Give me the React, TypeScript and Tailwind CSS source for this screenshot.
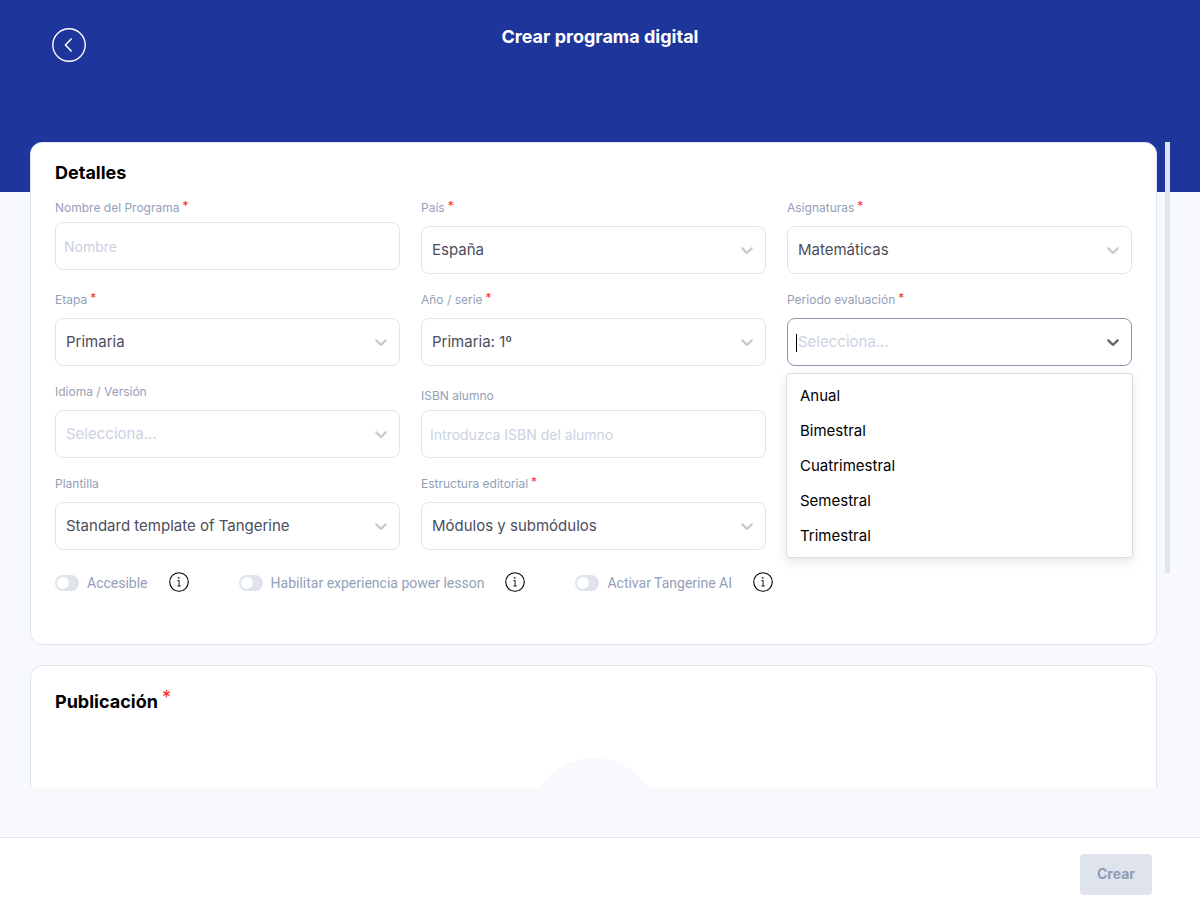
import { useState } from "react";
import type { ReactNode } from "react";

const periods = [
  "Anual",
  "Bimestral",
  "Cuatrimestral",
  "Semestral",
  "Trimestral",
];

const Chevron = ({ active }: { active?: boolean }) => (
  <svg
    viewBox="0 0 20 20"
    aria-hidden="true"
    className={
      active
        ? "pointer-events-none absolute top-[14px] right-[9px] size-5 fill-[#666666]"
        : "pointer-events-none absolute top-[14px] right-[9px] size-5 fill-[#cccccc]"
    }
  >
    <path d="M4.516 7.548c0.436-0.446 1.043-0.481 1.576 0l3.908 3.747 3.908-3.747c0.533-0.481 1.141-0.446 1.574 0 0.436 0.445 0.408 1.197 0 1.615-0.406 0.418-4.695 4.502-4.695 4.502-0.217 0.223-0.502 0.335-0.787 0.335s-0.57-0.112-0.789-0.335c0 0-4.287-4.084-4.695-4.502s-0.436-1.17 0-1.615z" />
  </svg>
);

const InfoIcon = () => (
  <svg
    viewBox="0 0 20 20"
    aria-hidden="true"
    className="size-5 fill-none stroke-black"
  >
    <circle cx="10" cy="10" r="9.3" strokeWidth="1.1" />
    <path d="M8.5 8.5h1.6v5.3M8.4 14h3.4" strokeWidth="0.9" />
    <circle cx="9.8" cy="5.9" r="0.8" className="fill-black stroke-none" />
  </svg>
);

const FieldLabel = ({
  id,
  required,
  children,
}: {
  id: string;
  required?: boolean;
  children: ReactNode;
}) => (
  <label htmlFor={id} className="flex gap-[3px] text-xs text-[#94a0b8]">
    {children}
    {required && <span className="-mt-0.5 text-[#ff2b2b]">*</span>}
  </label>
);

type SelectFieldProps = {
  id: string;
  label: string;
  value?: string;
  required?: boolean;
};

const SelectField = ({ id, label, value, required }: SelectFieldProps) => (
  <div className="flex flex-col gap-[10px]">
    <FieldLabel id={id} required={required}>
      {label}
    </FieldLabel>
    <div className="relative">
      <select
        id={id}
        className={
          value
            ? "h-12 w-full appearance-none rounded-lg border border-[#dfe5ed] bg-white px-[10px] text-[15px] text-[#4b4d5c] outline-none"
            : "h-12 w-full appearance-none rounded-lg border border-[#dfe5ed] bg-white px-[10px] text-[15px] text-[#cbd2e2] outline-none"
        }
      >
        <option>{value ?? "Selecciona..."}</option>
      </select>
      <Chevron />
    </div>
  </div>
);

type TextFieldProps = {
  id: string;
  label: string;
  placeholder: string;
  required?: boolean;
};

const TextField = ({ id, label, placeholder, required }: TextFieldProps) => (
  <div className="flex flex-col gap-[6px]">
    <FieldLabel id={id} required={required}>
      {label}
    </FieldLabel>
    <input
      id={id}
      type="text"
      placeholder={placeholder}
      className="h-12 w-full rounded-lg border border-[#dfe5ed] bg-white px-2 text-sm text-[#4b4d5c] outline-none placeholder:text-[#cbd2e2]"
    />
  </div>
);

const PeriodField = () => {
  const [open, setOpen] = useState(true);
  const [period, setPeriod] = useState("");

  return (
    <div className="flex flex-col gap-[10px]">
      <FieldLabel id="periodo" required>
        Periodo evaluación
      </FieldLabel>
      <div className="relative">
        <select
          id="periodo"
          value={period}
          onMouseDown={(e) => {
            e.preventDefault();
            setOpen(!open);
          }}
          onChange={(e) => setPeriod(e.target.value)}
          className={
            period
              ? "h-12 w-full appearance-none rounded-lg border border-[#8b95ad] bg-white px-[10px] text-[15px] text-[#4b4d5c] outline-none"
              : "h-12 w-full appearance-none rounded-lg border border-[#8b95ad] bg-white px-[10px] text-[15px] text-[#cbd2e2] outline-none"
          }
        >
          <option value="">Selecciona...</option>
          {periods.map((p) => (
            <option key={p} value={p}>
              {p}
            </option>
          ))}
        </select>
        {open && (
          <span className="absolute top-4 left-[9px] h-[18px] w-px bg-black" />
        )}
        <Chevron active={open} />
        {open && (
          <ul
            role="listbox"
            aria-label="Periodo evaluación"
            className="absolute top-full -right-px -left-px z-10 mt-[7px] rounded border border-[#dcdedf] bg-white pt-[5px] pb-[3px] shadow-[0_4px_11px_rgba(0,0,0,0.1)]"
          >
            {periods.map((p) => (
              <li
                key={p}
                role="option"
                aria-selected={p === period}
                onClick={() => {
                  setPeriod(p);
                  setOpen(false);
                }}
                className="flex h-[35px] cursor-default items-center px-[13px] text-[15px] text-black"
              >
                {p}
              </li>
            ))}
          </ul>
        )}
      </div>
    </div>
  );
};

const Toggle = ({ id, label }: { id: string; label: string }) => (
  <div className="flex items-center gap-[21px]">
    <label
      htmlFor={id}
      className="flex items-center gap-2 pt-0.5 font-[Roboto,sans-serif] text-sm text-[#94a0b8]"
    >
      <input
        id={id}
        type="checkbox"
        role="switch"
        className="h-4 w-6 appearance-none rounded-full bg-[#dfe4ec] p-0.5 before:block before:size-3 before:rounded-full before:bg-white checked:bg-[#1e359c] checked:before:ml-2"
      />
      {label}
    </label>
    <button type="button" aria-label={`Información: ${label}`}>
      <InfoIcon />
    </button>
  </div>
);

const App = () => {
  return (
    <div className="flex h-screen flex-col bg-[#f8f9fd] font-[Inter,sans-serif]">
      <header className="relative h-48 shrink-0 bg-[#1e359c] pt-[23px]">
        <button
          type="button"
          aria-label="Volver"
          className="absolute top-7 left-[52px] text-white"
        >
          <svg
            viewBox="0 0 34 34"
            className="size-[34px] fill-none stroke-current"
          >
            <circle cx="17" cy="17" r="16.2" strokeWidth="1.4" />
            <path
              d="M19.2 11l-5.8 6 5.8 6"
              strokeWidth="1.5"
              strokeLinecap="round"
              strokeLinejoin="round"
            />
          </svg>
        </button>
        <h1 className="text-center text-lg font-bold text-white">
          Crear programa digital
        </h1>
      </header>

      <main className="relative -mt-[50px] flex min-h-0 flex-1 gap-2 px-[30px] pb-[49px]">
        <div className="flex flex-1 flex-col gap-5 overflow-hidden">
          <section className="shrink-0 rounded-xl border border-[#dfe5ed] bg-white px-6 pt-4 pb-[51px]">
            <h2 className="text-lg font-bold text-black">Detalles</h2>
            <div className="mt-[13px] grid grid-cols-3 gap-x-[21px] gap-y-[18px]">
              <TextField
                id="nombre"
                label="Nombre del Programa"
                placeholder="Nombre"
                required
              />
              <SelectField id="pais" label="País" value="España" required />
              <SelectField
                id="asignaturas"
                label="Asignaturas"
                value="Matemáticas"
                required
              />
              <SelectField id="etapa" label="Etapa" value="Primaria" required />
              <SelectField
                id="serie"
                label="Año / serie"
                value="Primaria: 1º"
                required
              />
              <PeriodField />
              <SelectField id="idioma" label="Idioma / Versión" />
              <div className="self-end">
                <TextField
                  id="isbn"
                  label="ISBN alumno"
                  placeholder="Introduzca ISBN del alumno"
                />
              </div>
              <div className="col-start-1">
                <SelectField
                  id="plantilla"
                  label="Plantilla"
                  value="Standard template of Tangerine"
                />
              </div>
              <SelectField
                id="estructura"
                label="Estructura editorial"
                value="Módulos y submódulos"
                required
              />
            </div>
            <div className="mt-[21px] flex gap-[50px]">
              <Toggle id="accesible" label="Accesible" />
              <Toggle
                id="power-lesson"
                label="Habilitar experiencia power lesson"
              />
              <Toggle id="tangerine-ai" label="Activar Tangerine AI" />
            </div>
          </section>

          <section className="shrink-0 rounded-xl border border-[#dfe5ed] bg-white px-6 pt-[22px] pb-10">
            <h2 className="flex gap-1 text-lg font-bold text-black">
              Publicación
              <span className="-mt-1 font-normal text-[#ff1f1f]">*</span>
            </h2>
            <div className="mx-auto mt-[42px] size-32 rounded-full bg-[#f8f9fd]" />
          </section>
        </div>
        <div className="h-2/3 w-[5px] bg-[#dfe5ed]" />
      </main>

      <footer className="flex h-[73px] shrink-0 items-center justify-end border-t border-[#dfe4ee] bg-white px-12">
        <button
          type="button"
          disabled
          className="h-[41px] rounded bg-[#dfe4ec] px-[17px] text-sm font-bold text-[#8f9bb3]"
        >
          Crear
        </button>
      </footer>
    </div>
  );
};

export default App;
